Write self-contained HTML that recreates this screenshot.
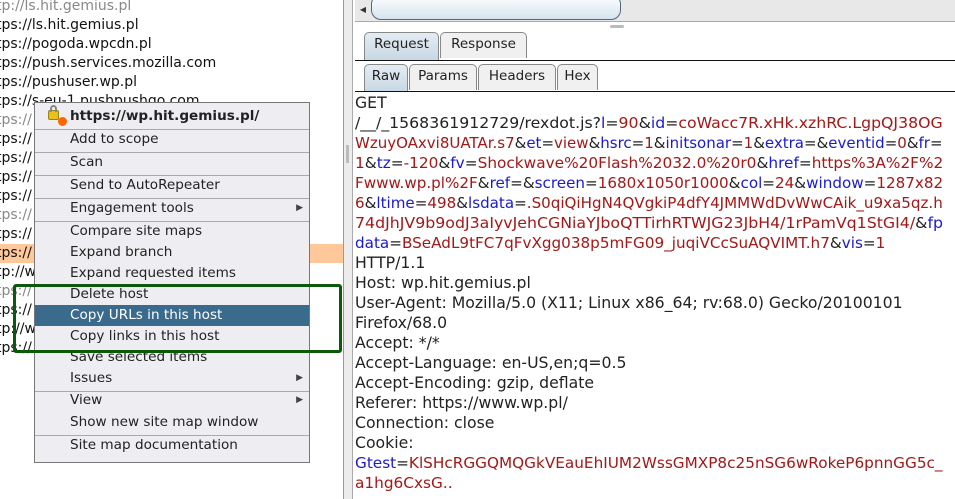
<!DOCTYPE html>
<html><head><meta charset="utf-8"><style>
*{margin:0;padding:0;box-sizing:border-box}
body{width:955px;height:499px;overflow:hidden;background:#fff;position:relative;font-family:"DejaVu Sans","Liberation Sans",sans-serif}
.abs{position:absolute}
.tree div{position:absolute;left:-4px;font-size:14px;color:#111;white-space:nowrap;height:19px;line-height:19px}
.g{color:#888!important}
.menu{position:absolute;left:34px;top:102px;width:276px;height:361px;background:#eeeef2;border:1px solid #777;font-size:13.6px;color:#222}
.menu .it{position:absolute;left:0;width:274px;height:21px;line-height:21px;padding-left:35px;white-space:nowrap}
.menu .sep{position:absolute;left:0;width:274px;height:1px;background:#aaa}
.arr{position:absolute;right:6px;top:0;font-size:9px;color:#444}
.tab{position:absolute;border:1px solid #888;border-bottom:none;border-radius:5px 5px 0 0;background:#f0f0f0;font-size:13.5px;color:#222;text-align:center;line-height:22px}
.tab.sel{background:linear-gradient(#e4ecf2,#c8d8e4)}
.code div{position:absolute;left:355px;font-size:15.7px;white-space:nowrap;color:#222;height:20px;line-height:20px;transform-origin:0 0}
.code div.fit{font-size:15px}
.r{color:#a31818}.b{color:#1a1ad0}
</style></head><body>
<div class="tree">
<div class="g" style="top:-3px">tp://ls.hit.gemius.pl</div>
<div style="top:16px">tps://ls.hit.gemius.pl</div>
<div style="top:35px">tps://pogoda.wpcdn.pl</div>
<div style="top:54px">tps://push.services.mozilla.com</div>
<div style="top:73px">tps://pushuser.wp.pl</div>
<div style="top:92px">tps://s-eu-1.pushpushgo.com</div>
<div class="g" style="top:111px">tps://</div>
<div style="top:130px">tps://</div>
<div style="top:149px">tps://</div>
<div style="top:168px">tps://</div>
<div style="top:187px">tps://</div>
<div class="g" style="top:206px">tps://</div>
<div style="top:225px">tps://</div>
<div style="top:244px;background:#ffc89a;width:348px;left:-4px">tps://</div>
<div style="top:263px">tp://w</div>
<div class="g" style="top:282px">tps://</div>
<div style="top:301px">tps://</div>
<div style="top:320px">tp://w</div>
<div style="top:339px">tps://</div>
</div>
<div class="abs" style="left:343px;top:0;width:1px;height:499px;background:#999"></div>
<div class="abs" style="left:344px;top:0;width:8px;height:499px;background:#ececec"></div>
<div class="abs" style="left:346px;top:145px;width:3px;height:18px;background:#bbb"></div>
<div class="abs" style="left:352px;top:0;width:1px;height:499px;background:#aaa"></div>
<div class="abs" style="left:355px;top:0;width:600px;height:22px;background:#e8e8e8;border-bottom:1px solid #aaa"></div>
<div class="abs" style="left:356px;top:0;width:14px;height:20px;font-size:8px;line-height:20px;color:#333;text-align:center">◀</div>
<div class="abs" style="left:371px;top:-6px;width:250px;height:26px;border:1px solid #567;border-radius:10px;background:linear-gradient(#fff,#d6e4ee)"></div>
<div class="abs" style="left:610px;top:25px;width:14px;height:3px;background:#bbb;border-radius:2px"></div>
<div class="tab sel" style="left:364px;top:32px;width:75px;height:28px">Request</div>
<div class="tab" style="left:440px;top:32px;width:87px;height:26px">Response</div>
<div class="abs" style="left:355px;top:60px;width:600px;height:1px;background:#111"></div>
<div class="tab sel" style="left:364px;top:64px;width:44px;height:28px">Raw</div>
<div class="tab" style="left:409px;top:64px;width:68px;height:26px">Params</div>
<div class="tab" style="left:478px;top:64px;width:78px;height:26px">Headers</div>
<div class="tab" style="left:557px;top:64px;width:41px;height:26px">Hex</div>
<div class="abs" style="left:355px;top:91px;width:600px;height:1px;background:#111"></div>
<div class="code">
<div style="top:93px">GET</div>
<div class="fit" style="top:113px">/__/_1568361912729/rexdot.js?<span class="b">l</span>=<span class="r">90</span>&amp;<span class="b">id</span>=<span class="r">coWacc7R.xHk.xzhRC.LgpQJ38OG</span></div>
<div class="fit" style="top:133px"><span class="r">WzuyOAxvi8UATAr.s7</span>&amp;<span class="b">et</span>=<span class="r">view</span>&amp;<span class="b">hsrc</span>=<span class="r">1</span>&amp;<span class="b">initsonar</span>=<span class="r">1</span>&amp;<span class="b">extra</span>=&amp;<span class="b">eventid</span>=<span class="r">0</span>&amp;<span class="b">fr</span>=</div>
<div class="fit" style="top:153px"><span class="r">1</span>&amp;<span class="b">tz</span>=<span class="r">-120</span>&amp;<span class="b">fv</span>=<span class="r">Shockwave%20Flash%2032.0%20r0</span>&amp;<span class="b">href</span>=<span class="r">https%3A%2F%2</span></div>
<div class="fit" style="top:173px"><span class="r">Fwww.wp.pl%2F</span>&amp;<span class="b">ref</span>=&amp;<span class="b">screen</span>=<span class="r">1680x1050r1000</span>&amp;<span class="b">col</span>=<span class="r">24</span>&amp;<span class="b">window</span>=<span class="r">1287x82</span></div>
<div class="fit" style="top:193px"><span class="r">6</span>&amp;<span class="b">ltime</span>=<span class="r">498</span>&amp;<span class="b">lsdata</span>=<span class="r">.S0qiQiHgN4QVgkiP4dfY4JMMWdDvWwCAik_u9xa5qz.h</span></div>
<div class="fit" style="top:213px"><span class="r">74dJhJV9b9odJ3aIyvJehCGNiaYJboQTTirhRTWJG23JbH4/1rPamVq1StGI4/</span>&amp;<span class="b">fp</span></div>
<div class="fit" id="f8" style="top:233px"><span class="b">data</span>=<span class="r">BSeAdL9tFC7qFvXgg038p5mFG09_juqiVCcSuAQVIMT.h7</span>&amp;<span class="b">vis</span>=<span class="r">1</span></div>
<div style="top:253px">HTTP/1.1</div>
<div style="top:273px">Host: wp.hit.gemius.pl</div>
<div style="top:293px">User-Agent: Mozilla/5.0 (X11; Linux x86_64; rv:68.0) Gecko/20100101</div>
<div style="top:313px">Firefox/68.0</div>
<div style="top:333px">Accept: */*</div>
<div style="top:353px">Accept-Language: en-US,en;q=0.5</div>
<div style="top:373px">Accept-Encoding: gzip, deflate</div>
<div style="top:393px">Referer: https://www.wp.pl/</div>
<div style="top:413px">Connection: close</div>
<div style="top:433px">Cookie:</div>
<div class="fit" style="top:453px"><span class="b">Gtest</span>=<span class="r">KlSHcRGGQMQGkVEauEhIUM2WssGMXP8c25nSG6wRokeP6pnnGG5c_</span></div>
<div class="fit" id="f20" style="top:473px"><span class="r">a1hg6CxsG..</span></div>
</div>
<div class="menu">
<div class="abs" style="left:13px;top:7px;width:11px;height:10px;background:#e8c020;border:1px solid #a08010;border-radius:2px"></div>
<div class="abs" style="left:15px;top:2px;width:7px;height:7px;border:2px solid #888;border-bottom:none;border-radius:4px 4px 0 0"></div>
<div class="abs" style="left:23px;top:14px;width:9px;height:9px;background:#f60;border-radius:50%"></div>
<div class="it" style="top:3px;font-weight:bold">https://wp.hit.gemius.pl/</div>
<div class="sep" style="top:26px"></div>
<div class="it" style="top:26px">Add to scope</div>
<div class="sep" style="top:49px"></div>
<div class="it" style="top:49px">Scan</div>
<div class="sep" style="top:72px"></div>
<div class="it" style="top:72px">Send to AutoRepeater</div>
<div class="sep" style="top:95px"></div>
<div class="it" style="top:95px">Engagement tools<span class="arr">▶</span></div>
<div class="sep" style="top:118px"></div>
<div class="it" style="top:118px">Compare site maps</div>
<div class="it" style="top:139px">Expand branch</div>
<div class="it" style="top:160px">Expand requested items</div>
<div class="it" style="top:181px">Delete host</div>
<div class="it" style="top:202px;background:#3a6a8c;color:#fff">Copy URLs in this host</div>
<div class="it" style="top:223px">Copy links in this host</div>
<div class="it" style="top:244px">Save selected items</div>
<div class="it" style="top:265px">Issues<span class="arr">▶</span></div>
<div class="sep" style="top:288px"></div>
<div class="it" style="top:287px">View<span class="arr">▶</span></div>
<div class="it" style="top:309px">Show new site map window</div>
<div class="sep" style="top:332px"></div>
<div class="it" style="top:332px">Site map documentation</div>
</div>
<div class="abs" style="left:13px;top:284px;width:329px;height:69px;border:3px solid #0b5a0b;border-radius:3px"></div>
<script>
document.querySelectorAll('.code .fit').forEach(function(e){
 var t=588; if(e.id==='f8')t=530; if(e.id==='f20')t=98;
 var w=e.scrollWidth; if(w>0)e.style.transform='scaleX('+(t/w)+')';
});
</script>
</body></html>
